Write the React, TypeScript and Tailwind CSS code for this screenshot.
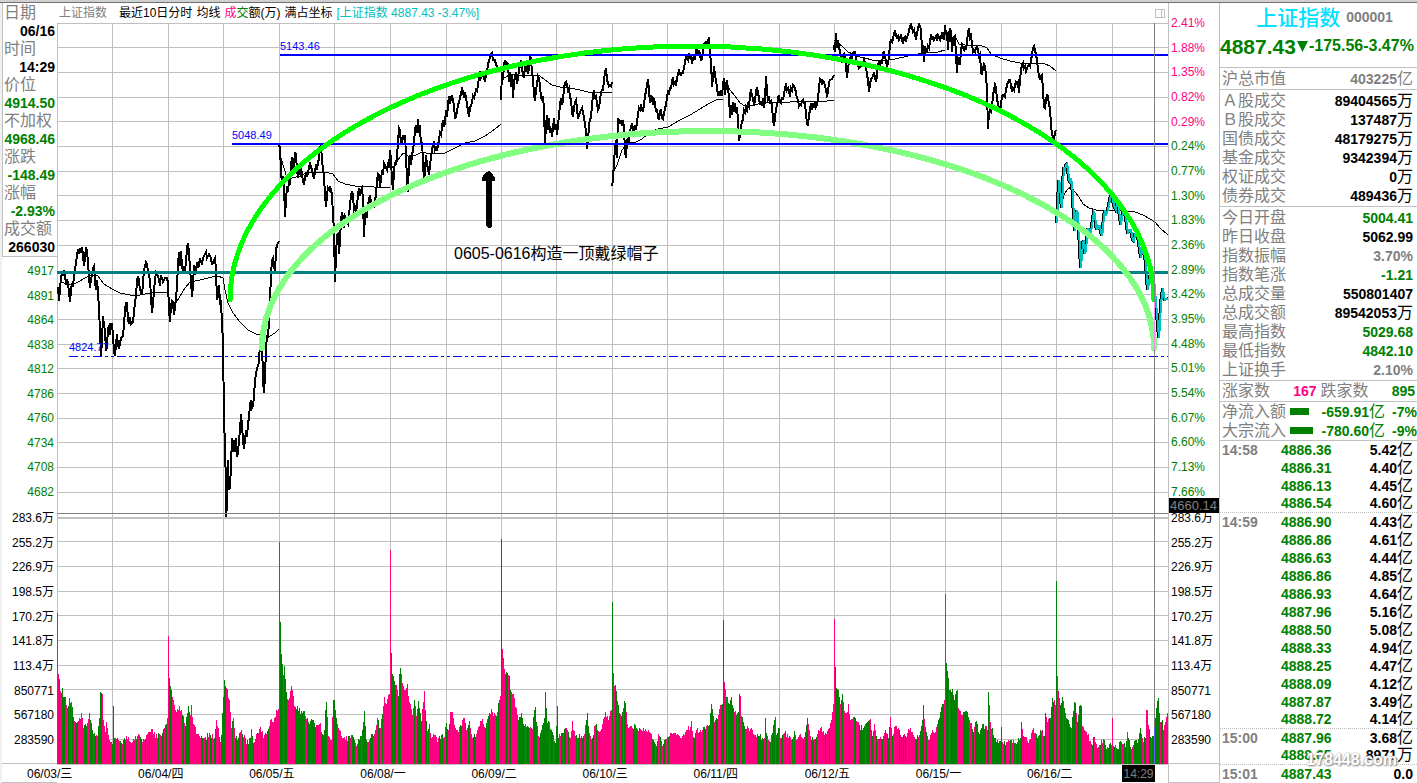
import React from 'react';
import { clsx } from 'clsx';

const infoRows = [
  { label: '日期', value: '06/16', green: false },
  { label: '时间', value: '14:29', green: false },
  { label: '价位', value: '4914.50', green: true },
  { label: '不加权', value: '4968.46', green: true },
  { label: '涨跌', value: '-148.49', green: true },
  { label: '涨幅', value: '-2.93%', green: true },
  { label: '成交额', value: '266030', green: false },
];

const priceLabels = ['4917', '4891', '4864', '4838', '4812', '4786', '4760', '4734', '4708', '4682'];

const volumeLabels = [
  '283.6万', '255.2万', '226.9万', '198.5万', '170.2万', '141.8万', '113.4万', '850771', '567180', '283590',
];

const percentLabels = [
  '2.41%', '1.88%', '1.35%', '0.82%', '0.29%', '0.24%', '0.77%', '1.30%', '1.83%', '2.36%',
  '2.89%', '3.42%', '3.95%', '4.48%', '5.01%', '5.54%', '6.07%', '6.60%', '7.13%', '7.66%',
];

const dates = [
  '06/03/三', '06/04/四', '06/05/五', '06/08/一', '06/09/二',
  '06/10/三', '06/11/四', '06/12/五', '06/15/一', '06/16/二',
];

const turnover = [
  ['Ａ股成交', '89404565万'],
  ['Ｂ股成交', '137487万'],
  ['国债成交', '48179275万'],
  ['基金成交', '9342394万'],
  ['权证成交', '0万'],
  ['债券成交', '489436万'],
];

const quotes = [
  { label: '今日开盘', value: '5004.41', color: 'text-[#008000]' },
  { label: '昨日收盘', value: '5062.99', color: 'text-black' },
  { label: '指数振幅', value: '3.70%', color: 'text-[#808080]' },
  { label: '指数笔涨', value: '-1.21', color: 'text-[#008000]' },
  { label: '总成交量', value: '550801407', color: 'text-black' },
  { label: '总成交额', value: '89542053万', color: 'text-black' },
  { label: '最高指数', value: '5029.68', color: 'text-[#008000]' },
  { label: '最低指数', value: '4842.10', color: 'text-[#008000]' },
  { label: '上证换手', value: '2.10%', color: 'text-[#808080]' },
];

const ticks = [
  ['14:58', '4886.36', '5.42亿'],
  ['', '4886.31', '4.40亿'],
  ['', '4886.13', '4.45亿'],
  ['', '4886.54', '4.60亿'],
  ['14:59', '4886.90', '4.43亿'],
  ['', '4886.86', '4.61亿'],
  ['', '4886.63', '4.44亿'],
  ['', '4886.86', '4.85亿'],
  ['', '4886.93', '4.64亿'],
  ['', '4887.96', '5.16亿'],
  ['', '4888.50', '5.08亿'],
  ['', '4888.33', '4.94亿'],
  ['', '4888.25', '4.47亿'],
  ['', '4888.09', '4.12亿'],
  ['', '4887.87', '3.49亿'],
  ['', '4888.72', '4.14亿'],
  ['15:00', '4887.96', '3.68亿'],
  ['', '4888.65', '8971万'],
  ['15:01', '4887.43', '0.0'],
];

// chart space: x 57..1168, prices y 23..518, volume y 518..764
const X0 = 57;
const CHART_W = 1111;

const gridX = [57, 112, 168, 223, 279, 334, 390, 446, 501, 556, 612, 667, 723, 779, 834, 890, 945, 1001, 1056, 1112];
const gridY = [
  23, 47, 72, 97, 121, 146, 171, 195, 220, 245, 294, 319, 344, 368, 393, 418, 442, 467, 492,
  541, 566, 591, 615, 640, 665, 689, 714, 739,
];

const priceLines = [
  '58,287 59,301 60,290 61,277 62,273 63,276 64,270 65,274 66,285 67,279 68,284 69,292 70,302 71,290 72,283 73,287 74,276 75,270 76,262 77,256 78,249 79,252 80,248 81,253 82,247 83,255 84,266 85,258 86,247 87,252 88,262 89,278 90,288 91,279 92,275 93,268 94,266 95,282 96,290 97,280 98,292 99,310 100,330 101,357 102,340 103,316 104,325 105,330 106,351 107,346 108,328 109,326 110,335 111,324 112,324 113,335 114,352 115,356 116,345 117,334 118,345 119,349 120,343 121,338 123,336 124,325 125,310 126,303 127,303 128,320 129,324 130,317 131,324 133,322 134,312 135,303 136,296 137,280 138,276 139,281 140,290 142,295 143,283 144,270 145,266 146,262 147,264 148,271 150,280 152,313 153,304 154,290 155,281 156,272 157,273 159,280 160,286 161,275 163,282 165,278 167,278 168,283 169,310 170,322 171,305 172,301 173,303 174,315 175,308 176,299 177,286 178,265 179,252 180,266 181,251 182,266 183,272 184,268 185,270 186,262 187,248 188,243 189,252 190,270 191,280 192,297 193,285 194,265 195,275 196,270 197,262 198,268 199,265 200,258 202,265 203,258 205,254 206,252 207,258 209,254 211,258 212,265 213,262 215,258 216,270 217,300 218,295 219,285 220,302 221,300 222,325 223,340 224,420 225,445 226,488 226,517 227,505 228,460 229,490 230,488 231,465 232,438 233,452 234,440 235,452 236,438 237,457 238,452 239,440 240,430 241,414 242,425 243,440 244,449 245,440 246,430 247,437 248,423 249,418 250,405 251,400 252,408 253,406 254,396 255,380 257,368 259,363 260,342 262,340 263,380 264,393 265,375 266,350 267,335 268,338 269,320 270,300 271,275 272,260 273,258 274,265 275,273 276,250 277,245 279,241',
  '279,145 280,148 281,172 282,183 283,176 284,185 285,217 286,200 287,186 288,192 289,180 290,182 291,165 292,157 293,170 294,165 295,152 296,155 297,170 298,178 299,172 300,174 301,165 302,176 303,180 304,185 305,178 306,172 307,177 308,172 309,168 310,162 311,167 312,170 313,175 314,179 315,172 316,164 317,170 318,163 319,158 320,147 321,146 322,160 323,170 324,176 325,195 326,207 327,195 328,188 329,190 330,186 331,190 332,195 333,215 334,230 335,282 336,255 337,235 338,234 339,254 340,240 341,220 342,212 343,218 344,228 345,216 346,218 347,222 348,224 349,215 350,205 351,195 352,191 353,195 354,210 355,208 356,213 357,205 358,195 359,188 360,196 361,190 362,188 363,200 364,237 365,215 366,208 367,218 368,205 369,200 370,195 371,202 372,208 373,202 374,205 375,200 376,195 377,180 378,174 379,175 380,187 381,180 382,170 383,175 384,163 385,165 386,168 387,170 388,165 389,168 390,150 391,160 392,180 393,190 394,170 395,162 396,165 397,155 398,143 399,128 400,130 401,145 402,140 403,135 404,140 405,135 406,155 407,180 408,192 409,160 410,155 411,165 412,155 413,150 414,142 415,130 416,125 417,133 418,119 419,130 420,128 421,145 422,142 423,160 424,183 425,170 426,155 427,165 428,168 429,175 430,165 431,158 432,150 433,145 434,141 435,150 436,148 437,151 438,145 439,140 440,133 441,135 442,127 443,120 444,127 445,122 446,110 447,117 448,105 449,96 450,104 451,98 452,95 453,101 454,105 455,119 456,116 457,112 458,105 459,102 460,98 461,93 462,89 463,92 464,98 465,94 466,97 467,105 468,110 469,117 470,108 471,105 472,103 473,96 474,98 475,94 476,90 477,91 478,85 479,78 480,71 481,78 482,76 483,72 484,78 485,82 486,75 487,72 488,65 489,60 490,58 491,54 492,53 493,60 495,60 496,65 498,68',
  '501,100 502,72 503,80 504,65 505,60 506,68 507,63 508,64 509,82 510,72 511,87 512,75 513,98 514,82 515,77 516,72 517,84 518,78 519,70 520,65 521,60 522,68 523,75 524,78 525,65 526,72 527,62 528,74 529,68 530,54 531,60 532,72 533,78 534,95 535,101 536,90 537,84 538,76 539,78 540,85 541,98 542,100 543,96 544,110 545,143 546,125 547,115 548,130 549,118 550,133 551,128 552,137 553,128 554,118 555,130 556,124 557,135 558,125 559,115 560,105 561,98 562,105 563,100 564,88 565,83 566,82 567,85 568,90 569,88 570,97 571,100 572,112 573,117 574,108 575,102 576,100 577,108 578,119 579,115 580,112 581,110 582,108 583,113 584,117 585,125 586,130 587,149 588,142 589,125 590,119 591,118 592,105 593,95 594,92 595,97 596,96 597,103 598,110 599,108 600,100 601,92 602,90 603,90 604,80 605,72 606,68 607,80 608,83 609,86 610,85 611,86 612,82',
  '612,186 613,180 614,160 615,150 616,140 617,158 618,118 619,120 620,124 621,120 622,126 623,120 624,127 625,152 626,158 627,140 628,138 629,143 630,130 631,128 632,123 633,128 634,133 635,125 636,130 637,122 638,114 639,108 640,110 641,106 642,109 643,112 644,105 645,95 646,92 647,85 648,79 649,90 650,103 651,95 652,98 653,105 654,100 655,103 656,112 657,109 658,117 659,120 660,112 661,109 662,118 663,119 664,114 665,108 666,105 667,97 668,92 669,93 670,88 671,88 672,82 673,77 674,84 675,82 676,86 677,78 678,74 679,71 680,74 681,75 682,73 683,73 684,68 685,62 686,57 687,58 688,60 689,53 690,59 691,55 692,64 693,58 694,57 695,60 696,49 697,48 698,55 699,50 700,54 701,61 702,58 703,52 704,44 705,43 706,42 707,44 708,41 709,37 710,55 711,60 712,87 713,78 714,66 715,76 716,80 717,88 718,96 719,93 720,96 721,90 722,96 723,85 724,78 725,95 726,85 727,80 728,90 729,95 730,118 731,105 732,115 733,102 734,112 735,103 736,113 737,107 738,120 739,141 740,135 741,125 742,123 743,118 744,110 745,112 746,107 747,110 748,105 749,107 750,95 751,89 752,96 753,98 754,105 755,100 756,92 757,87 758,93 759,98 760,105 761,101 762,106 763,98 764,108 765,100 766,76 767,92 768,100 769,98 770,102 771,101 772,106 773,120 774,126 775,118 776,108 777,106 778,98 779,95 780,102 781,103 782,97 783,100 784,94 785,88 786,85 787,90 788,88 789,91 790,97 791,88 792,90 793,85 794,86 795,88 796,93 797,98 798,100 799,106 800,104 801,105 802,101 803,100 804,103 805,103 806,114 807,123 808,126 809,115 810,110 811,103 812,110 813,103 814,106 815,102 816,107 817,105 818,98 819,88 820,79 821,80 822,85 823,81 824,82 825,86 826,90 827,95 828,92 829,82 830,80 832,79 834,75',
  '834,50 834,45 835,52 836,33 837,48 838,40 839,47 840,52 841,60 842,63 843,55 844,54 845,58 846,65 847,78 848,68 849,62 850,60 851,55 852,58 853,53 854,52 855,52 856,58 857,62 858,65 859,68 861,66 863,65 864,60 866,66 867,75 868,80 869,92 870,84 871,79 872,78 873,76 874,72 875,78 876,82 877,76 878,65 879,62 880,66 881,60 882,64 883,54 884,51 885,58 886,60 887,67 888,62 889,58 890,42 891,40 892,42 893,39 894,34 895,30 896,36 897,38 898,36 899,40 900,38 901,34 902,40 903,44 904,38 905,37 906,40 907,37 908,35 909,31 910,26 911,24 912,28 913,32 914,30 915,35 916,38 917,34 918,28 919,24 920,26 921,30 922,50 923,48 924,62 925,46 926,50 927,51 928,46 929,48 930,42 931,34 932,40 933,36 934,40 935,38 936,36 937,39 938,35 940,40 942,34 944,40 945,25 946,35 947,32 948,50 949,35 950,28 951,32 952,52 953,40 954,37 955,36 956,55 957,73 958,58 959,60 960,65 961,50 962,45 963,48 964,50 965,46 966,50 967,42 968,32 969,28 970,38 971,36 972,44 973,52 974,50 975,52 976,48 977,47 978,50 979,56 980,54 981,72 982,75 983,68 984,64 985,66 986,75 987,90 988,129 989,112 990,110 991,112 992,108 993,95 994,90 995,85 996,88 997,100 998,103 999,108 1000,110 1001,105 1002,96 1003,95 1005,97 1006,90 1007,85 1008,82 1009,80 1010,80 1011,86 1012,92 1013,88 1014,90 1015,85 1016,82 1017,84 1018,82 1019,93 1020,80 1021,70 1022,65 1023,63 1024,68 1025,66 1026,71 1027,68 1028,66 1029,64 1030,66 1031,60 1032,55 1033,48 1034,46 1035,50 1036,55 1037,60 1038,70 1039,76 1040,80 1041,76 1042,75 1043,90 1044,107 1045,108 1046,100 1047,94 1048,97 1049,104 1050,109 1051,125 1052,134 1053,137 1054,140 1055,132 1056,130',
];

const todayLine =
  '1056,223 1057,205 1058,180 1059,185 1060,200 1061,208 1062,185 1063,167 1064,172 1065,165 1066,164 1067,168 1068,180 1069,182 1070,178 1071,184 1072,195 1073,220 1074,231 1075,215 1076,210 1077,215 1078,230 1079,250 1080,268 1081,255 1082,243 1083,240 1084,254 1085,250 1086,238 1087,228 1088,232 1089,230 1090,233 1091,226 1092,218 1093,212 1094,214 1095,225 1096,230 1097,226 1098,228 1099,225 1100,232 1101,236 1102,230 1103,215 1104,212 1105,216 1106,212 1107,210 1108,205 1109,200 1110,195 1111,196 1112,200 1113,205 1114,208 1115,210 1116,204 1117,203 1118,210 1120,225 1121,218 1122,212 1124,214 1125,218 1127,234 1128,230 1130,230 1132,240 1133,241 1134,235 1137,237 1139,250 1140,258 1141,250 1143,253 1145,262 1146,280 1147,290 1148,283 1149,275 1151,280 1153,285 1155,300 1156,315 1157,325 1158,338 1159,325 1160,302 1161,297 1162,288 1163,295 1164,300 1166,299 1168,298';

const averageLines = [
  '60,281 64,283 72,285 78,282 85,278 92,275 98,276 104,284 112,289 120,293 130,295 140,295 150,293 160,292 168,292',
  '171,301 176,303 180,296 185,288 190,282 200,280 212,277 218,276 223,278 225,290 228,303 233,313 240,322 248,330 256,334 264,336 270,336 275,333 279,329',
  '279,148 281,158 284,168 287,178 292,178 300,176 306,173 315,172 325,172 333,174 338,181 345,184 355,186 368,186 380,188 388,187 390,187',
  '391,165 393,168 398,160 403,153 410,157 416,155 422,152 430,154 445,153 455,148 465,143 475,141 485,136 495,129 501,124',
  '501,75 505,78 510,74 520,76 530,75 540,76 545,80 552,85 560,87 570,88 580,90 588,92 600,93 612,92',
  '612,175 617,165 622,150 628,143 636,142 642,139 650,132 658,129 668,127 680,120 690,115 700,109 710,103 716,100 723,99',
  '723,80 730,90 735,96 740,103 745,106 755,105 765,102 780,103 800,101 820,102 834,100',
  '834,40 842,46 848,52 855,56 865,58 872,60 882,61 895,59 908,56 918,54 928,52 938,52 945,50',
  '946,38 952,37 956,38 959,44 965,45 972,45 980,45 987,48 991,54 1000,58 1010,61 1020,63 1032,63 1045,64 1050,66 1056,71',
  '1062,203 1064,195 1067,190 1071,187 1075,192 1079,197 1083,204 1089,208 1100,211 1112,210 1125,211 1135,212 1143,215 1150,219 1155,222 1160,228 1168,235',
];

// top edge of the volume bars, one string per trading day
const volumeTops = [
  '57,613 58,674 59,679 60,691 62,688 63,697 65,697 67,708 69,698 71,702 73,717 75,722 80,719 81,713 83,728 86,726 89,713 91,723 93,734 97,736 99,718 100,692 102,694 103,720 105,732 106,722 108,735 110,742 112,744 113,706 114,738 118,740 122,744 126,736 130,742 134,740 138,734 142,742 146,735 150,732 152,729 155,738 158,733 162,733 165,725 167,718',
  '168,636 169,678 171,690 173,700 176,712 179,706 182,715 185,726 188,706 190,715 191,705 193,724 197,734 203,738 210,735 214,738 216,720 218,728 220,742 221,735 223,697 224,680 226,688 229,700 231,728 233,718 235,738 238,738 241,730 246,744 250,738 251,729 253,743 257,733 260,727 263,738 266,734 270,720 273,722 276,710 278,709',
  '279,542 280,622 281,654 283,675 284,666 286,692 288,700 291,686 294,706 297,706 300,714 304,711 308,722 313,720 315,727 320,723 322,734 324,730 325,710 326,702 328,736 331,740 333,700 334,700 335,710 338,728 341,736 345,740 351,735 356,746 360,736 362,730 364,711 366,740 368,742 372,734 375,730 377,718 380,728 382,714 384,697 386,704 388,695 389,694',
  '390,550 391,653 392,674 394,681 397,690 398,696 399,674 400,668 402,683 404,690 407,684 409,702 412,715 414,700 416,716 418,701 420,713 421,721 423,702 424,691 425,710 427,731 429,724 431,738 434,735 437,742 442,734 444,737 446,723 448,730 450,712 452,712 455,728 458,732 462,720 464,718 466,730 469,721 472,738 476,734 480,721 482,719 485,728 489,713 491,709 493,716 496,716 499,700 500,696',
  '501,539 502,649 503,658 504,669 506,672 508,675 509,676 510,690 513,694 515,707 518,720 521,713 523,724 528,727 532,729 534,710 535,707 536,722 538,736 541,730 544,718 545,692 546,708 547,723 549,722 551,730 555,743 557,706 558,738 562,733 566,728 570,738 572,721 573,730 576,735 580,738 584,734 587,713 589,733 592,738 595,725 599,732 602,724 605,712 608,720 611,710',
  '612,602 613,673 614,686 615,685 617,701 619,713 621,716 622,712 624,701 625,703 627,724 631,726 636,728 640,729 644,731 648,730 652,739 656,746 658,734 662,746 665,739 669,736 673,733 678,735 682,736 687,730 690,727 691,721 693,737 696,730 702,730 706,726 709,725 711,704 712,709 714,722 717,719 719,709 722,704',
  '723,620 724,682 726,697 729,704 731,697 733,708 736,715 738,712 739,694 740,696 741,716 744,726 748,728 752,730 755,735 758,736 762,738 764,738 765,718 766,733 770,742 774,720 775,717 776,735 779,728 780,738 784,733 788,738 791,740 794,731 796,740 800,734 804,737 807,718 809,730 811,740 816,737 820,728 825,733 829,728 831,720 833,704',
  '834,619 835,667 836,688 838,690 840,704 842,694 844,711 847,712 848,704 850,720 855,718 857,722 862,730 867,722 870,719 872,736 874,724 876,736 881,739 885,730 888,738 890,717 892,736 895,726 900,735 905,736 910,728 914,737 918,737 922,720 923,705 925,727 928,740 932,730 935,732 938,720 941,707 944,700',
  '945,594 946,663 948,678 949,690 952,689 954,700 957,690 958,708 962,715 967,712 969,720 973,732 975,722 977,724 979,734 983,724 987,730 988,692 989,705 990,722 993,735 996,742 1000,741 1001,727 1002,742 1006,742 1010,740 1016,744 1020,738 1021,722 1023,736 1028,743 1033,728 1037,738 1040,730 1044,736 1045,713 1047,722 1050,718 1052,698 1054,700 1055,705',
  '1056,581 1057,676 1058,691 1060,705 1062,697 1064,708 1066,718 1069,724 1071,728 1074,702 1075,703 1077,722 1079,706 1081,706 1082,726 1086,732 1091,744 1094,737 1098,747 1103,739 1106,749 1109,744 1111,745 1112,718 1113,746 1117,749 1120,741 1125,747 1127,732 1130,747 1134,741 1137,743 1140,728 1143,742 1145,738 1146,710 1147,710 1148,725 1150,737 1153,736 1154,727 1155,718 1157,701 1158,698 1160,722 1162,720 1163,730 1165,722 1167,713',
];

// stretches where one side clearly dominates
const greenRanges = [
  [98, 101], [113, 113], [169, 170], [187, 189], [221, 225], [235, 239], [280, 282], [284, 286], [296, 303],
  [310, 314], [324, 326], [333, 334], [362, 365], [391, 394], [399, 400], [417, 420], [505, 507], [509, 510],
  [518, 522], [533, 535], [543, 546], [555, 558], [586, 588], [624, 625], [709, 712], [728, 733], [738, 739],
  [757, 763], [835, 839], [859, 864], [866, 869], [921, 923], [940, 941], [946, 947], [950, 956], [965, 968],
  [975, 985], [987, 988], [995, 1000], [1036, 1038], [1051, 1053], [1061, 1062], [1067, 1070], [1073, 1075],
  [1077, 1081], [1116, 1119], [1137, 1141], [1155, 1157],
];
const redRanges = [
  [79, 82], [102, 108], [126, 133], [150, 155], [174, 181], [192, 199], [226, 230], [270, 278], [283, 283],
  [287, 294], [326, 332], [340, 345], [373, 377], [383, 389], [402, 405], [408, 411], [430, 438], [450, 459],
  [478, 484], [502, 504], [511, 517], [569, 573], [600, 610], [613, 614], [626, 632], [640, 650], [669, 692],
  [724, 725], [745, 756], [796, 800], [818, 824], [830, 833], [843, 853], [893, 898], [906, 912], [930, 937],
  [958, 962], [1006, 1009], [1026, 1034], [1057, 1059], [1082, 1089], [1163, 1168],
];

const spikes: Record<number, string> = {
  57: 'red', 168: 'red', 279: 'red', 390: 'red', 834: 'red', 945: 'red', 1112: 'red',
  501: 'green', 612: 'green', 723: 'green', 1056: 'green',
};

const inRanges = (ranges: number[][], x: number) => ranges.some(([a, b]) => x >= a && x <= b);

const buildVolume = () => {
  let seed = 7;
  const rand = () => {
    seed = (seed * 1103515245 + 12345) % 2147483648;
    return seed / 2147483648;
  };
  let red = '';
  let green = '';
  let isRed = false;
  let run = 0;

  volumeTops.forEach((day) => {
    const pts = day.split(' ').map((p) => p.split(',').map(Number));
    for (let i = 0; i < pts.length; i++) {
      const [x1, y1] = pts[i];
      const [x2, y2] = pts[i + 1] || [x1 + 1, y1];
      for (let x = x1; x < x2; x++) {
        if (run <= 0) {
          isRed = !isRed;
          run = Math.ceil(rand() * 3);
        }
        run--;
        const noise = x === x1 ? 0 : Math.round(rand() * 6 - 3);
        const top = Math.round(y1 + ((y2 - y1) * (x - x1)) / (x2 - x1)) + noise;
        let useRed = isRed;
        if (inRanges(redRanges, x)) useRed = true;
        if (inRanges(greenRanges, x)) useRed = false;
        if (spikes[x]) useRed = spikes[x] === 'red';
        const bar = `M${x} ${top}h1V764h-1z`;
        if (useRed) red += bar;
        else green += bar;
      }
    }
  });
  return { red, green };
};

const volume = buildVolume();

const fromLeft = (x: number) => ({ left: `${((x - X0) / CHART_W) * 100}%` });

// digits are bold, the 万 / 亿 unit behind them is not
const Amount: React.FC<{ value: string }> = ({ value }) => {
  const unit = value.match(/[万亿]$/);
  if (!unit) return <>{value}</>;
  return (
    <>
      {value.slice(0, -1)}
      <span className="text-base leading-none font-normal">{unit[0]}</span>
    </>
  );
};

const Row: React.FC<{ label: string; value: string; color?: string }> = ({ label, value, color = 'text-black' }) => (
  <div className="flex h-[19px] items-center justify-between">
    <dt className="text-base leading-none text-[#808080]">{label}</dt>
    <dd className={clsx('flex items-center text-sm leading-none font-bold', color)}>
      <Amount value={value} />
    </dd>
  </div>
);

const Chart: React.FC = () => (
  <div className="relative">
    <svg
      viewBox="57 23 1111 741"
      preserveAspectRatio="none"
      className="block h-[741px] w-full"
      shapeRendering="crispEdges"
      role="img"
      aria-label="上证指数"
    >
      <g fill="#c0c0c0">
        {gridX.map((x) => (
          <rect key={x} x={x} y={23} width={1} height={741} />
        ))}
        {gridY.map((y) => (
          <rect key={y} x={57} y={y} width={1111} height={1} />
        ))}
        <rect x={57} y={517} width={1111} height={2} />
      </g>

      <path d={volume.green} fill="#008000" />
      <path d={volume.red} fill="#ff0080" />
      <rect x={1154} y={727} width={1} height={37} fill="#6060ff" />

      <g fill="none" stroke="#000" strokeWidth={1}>
        {averageLines.map((points) => (
          <polyline key={points} points={points} />
        ))}
      </g>
      <g fill="none" stroke="#000" strokeWidth={2}>
        {priceLines.map((points) => (
          <polyline key={points} points={points} />
        ))}
      </g>
      <polyline points={todayLine} fill="none" stroke="#000" strokeWidth={2} />
      <polyline points={todayLine} fill="none" stroke="#00c0c0" strokeWidth={2} transform="translate(1 0)" />

      <rect x={57} y={271} width={1111} height={3} fill="#008080" />
      <path d="M262 348A446 217 0 0 1 1154 348" fill="none" stroke="#80ff80" strokeWidth={6} strokeLinecap="round" />
      <rect x={280} y={54} width={888} height={2} fill="#0000ff" />
      <rect x={232} y={143} width={936} height={2} fill="#0000ff" />
      <path d="M69 356.5H1168" stroke="#0000ff" strokeWidth={1} strokeDasharray="9 3 3 3 3 3" />
      <path d="M230 300A462 254 0 0 1 1154 300" fill="none" stroke="#00ff00" strokeWidth={5} strokeLinecap="round" />

      <path d="M489 171l3 2 3 5v3h-3v45l-2 2h-2l-2-2v-45h-4v-3l3-5z" fill="#000" />

      <rect x={57} y={513} width={1111} height={1} fill="#808080" />
      <rect x={1154} y={23} width={1} height={704} fill="#808080" />
      <rect x={1154} y={302} width={1} height={48} fill="#ff80ff" />
    </svg>

    <span style={fromLeft(280)} className="absolute top-4 text-[11px] leading-[14px] text-[#0000ff]">5143.46</span>
    <span style={fromLeft(232)} className="absolute top-[105px] text-[11px] leading-[14px] text-[#0000ff]">5048.49</span>
    <span style={fromLeft(69)} className="absolute top-[317px] text-[11px] leading-[14px] text-[#0000ff]">4824.77</span>
    <span style={fromLeft(454)} className="absolute top-[221px] text-base leading-5 whitespace-nowrap text-black">
      0605-0616构造一顶戴绿帽子
    </span>
  </div>
);

const SidePanel: React.FC = () => (
  <aside className="relative w-[198px] shrink-0 border-l border-[#c0c0c0]">
    <header className="h-16">
      <h1 className="flex h-7 items-center justify-center gap-1.5 pl-3 text-sm font-bold text-[#808080]">
        <span className="text-[21px] leading-none font-medium text-[#00e0ff]">上证指数</span>
        000001
      </h1>
      <p className="flex h-[30px] items-center text-base leading-none font-bold whitespace-nowrap text-[#008000]">
        <span className="text-[21px]">4887.43</span>
        <svg viewBox="0 0 11 11" className="mx-px h-[11px] w-[11px]">
          <path d="M0 0h11L5.500 11z" fill="#008000" />
        </svg>
        <span>-175.56</span>
        <span>-3.47%</span>
      </p>
    </header>

    <dl className="border-t border-[#c0c0c0] py-px pr-1 pl-0.5">
      <Row label="沪总市值" value="403225亿" color="text-[#808080]" />
    </dl>
    <dl className="border-t border-[#c0c0c0] py-px pr-1 pl-0.5">
      {turnover.map(([label, value]) => (
        <Row key={label} label={label} value={value} />
      ))}
    </dl>
    <dl className="border-t border-[#c0c0c0] py-px pr-1 pl-0.5">
      {quotes.map((q) => (
        <Row key={q.label} label={q.label} value={q.value} color={q.color} />
      ))}
    </dl>
    <dl className="flex h-[21px] items-center border-t border-[#c0c0c0] pr-0.5 pl-0.5 text-sm leading-none font-bold">
      <dt className="text-base leading-none font-normal text-[#808080]">涨家数</dt>
      <dd className="ml-auto text-[#ff0080]">167</dd>
      <dt className="ml-1 text-base leading-none font-normal text-[#808080]">跌家数</dt>
      <dd className="ml-auto text-[#008000]">895</dd>
    </dl>
    <dl className="border-t border-[#c0c0c0] pl-0.5 text-sm leading-none font-bold text-[#008000]">
      <div className="flex h-[19px] items-center">
        <dt className="text-base leading-none font-normal text-[#808080]">净流入额</dt>
        <dd className="flex flex-1 items-center">
          <i className="ml-1 h-[7px] w-[19px] bg-[#008000]" />
          <span className="ml-auto flex items-center"><Amount value="-659.91亿" /></span>
          <span className="w-8 text-right">-7%</span>
        </dd>
      </div>
      <div className="flex h-[19px] items-center">
        <dt className="text-base leading-none font-normal text-[#808080]">大宗流入</dt>
        <dd className="flex flex-1 items-center">
          <i className="ml-1 h-[7px] w-[23px] bg-[#008000]" />
          <span className="ml-auto flex items-center"><Amount value="-780.60亿" /></span>
          <span className="w-8 text-right">-9%</span>
        </dd>
      </div>
    </dl>

    <table className="w-full border-collapse border-t border-[#c0c0c0] text-sm leading-none font-bold">
      <tbody>
        {ticks.map(([time, price, amount], i) => (
          <tr key={i} className={clsx('h-[18px]', time && i > 0 && 'border-t border-dotted border-[#c0c0c0]')}>
            <td className="w-[61px] p-0 pl-0.5 text-[#808080]">{time}</td>
            <td className="p-0 text-[#008000]">{price}</td>
            <td className="p-0 pr-1">
              <div className="flex h-[17px] items-center justify-end">
                <Amount value={amount} />
              </div>
            </td>
          </tr>
        ))}
      </tbody>
    </table>

    <span className="absolute right-5 bottom-3 text-base leading-6 font-bold text-white [text-shadow:1px_1px_2px_#808080,0_0_2px_#a0a0a0]">
      178448.com
    </span>
  </aside>
);

const App: React.FC = () => {
  return (
    <div className="min-h-screen overflow-hidden bg-white font-['Liberation_Sans','Noto_Sans_CJK_SC',sans-serif]">
      <div className="h-[3px] border-b border-[#707070] bg-[#d0d0d0]" />
      <div className="flex border-l-2 border-[#f0f0f0]">
        <div className="w-[55px] shrink-0 text-right text-xs text-[#008000]">
          <dl className="border-b border-l border-[#c0c0c0] pt-px pr-0.5 pl-px">
            {infoRows.map((row) => (
              <div key={row.label}>
                <dt className="h-[18px] text-left text-base leading-[18px] text-[#808080]">{row.label}</dt>
                <dd className={clsx('h-[18px] text-sm leading-[18px] font-bold', row.green ? 'text-[#008000]' : 'text-black')}>
                  {row.value}
                </dd>
              </div>
            ))}
          </dl>
          <div className="mt-[5px] flex h-[239px] flex-col justify-between pr-[3px] leading-[18px]">
            {priceLabels.map((label) => (
              <span key={label}>{label}</span>
            ))}
          </div>
          <div className="mt-2 flex h-[240px] flex-col justify-between pr-[3px] leading-[18px] text-black">
            {volumeLabels.map((label) => (
              <span key={label}>{label}</span>
            ))}
          </div>
          <div className="mt-[14px] h-5 border-y border-[#c0c0c0]" />
        </div>

        <main className="min-w-0 flex-1">
          <div className="flex h-5 items-center gap-3 pl-0.5 text-xs whitespace-nowrap">
            <span className="text-[#808080]">上证指数</span>
            <span className="flex gap-1 text-black">
              <span>最近10日分时</span>
              <span>均线</span>
              <span>
                <span className="text-[#ff0080]">成</span>
                <span className="text-[#008000]">交</span>额(万)
              </span>
              <span>满占坐标</span>
              <span className="text-[#00c0c0]">[上证指数 4887.43 -3.47%]</span>
            </span>
            <svg viewBox="0 0 11 11" className="mr-0.5 ml-auto h-[11px] w-[11px]" shapeRendering="crispEdges">
              <path d="M.5 1.500h9v8h-9zM6.500 1.500v8" fill="none" stroke="#c0c0c0" />
            </svg>
          </div>
          <Chart />
          <div className="relative h-5 border-y border-[#c0c0c0] text-xs leading-[18px]">
            <div className="mr-[30px] -ml-[30px] grid grid-cols-10">
              {dates.map((date) => (
                <span key={date}>{date}</span>
              ))}
            </div>
            <span className="absolute top-0 right-[13px] h-[17px] w-[33px] bg-black text-center text-[#808080]">14:29</span>
          </div>
        </main>

        <div className="relative w-[51px] shrink-0 border-l border-[#c0c0c0] text-xs">
          <div className="mt-[11px] flex h-[487px] flex-col justify-between pl-0.5 leading-[18px] text-[#008000]">
            {percentLabels.map((label, i) => (
              <span key={label} className={clsx(i < 5 && 'text-[#ff0080]')}>{label}</span>
            ))}
          </div>
          <div className="mt-2 flex h-[240px] flex-col justify-between pl-0.5 leading-[18px]">
            {volumeLabels.map((label) => (
              <span key={label}>{label}</span>
            ))}
          </div>
          <div className="mt-[14px] h-5 border-y border-[#c0c0c0]" />
          <span className="absolute top-[495px] left-0 h-[15px] w-full bg-black pl-px text-[13px] leading-[15px] text-[#808080]">
            4660.14
          </span>
        </div>

        <SidePanel />
      </div>
    </div>
  );
};

export default App;
